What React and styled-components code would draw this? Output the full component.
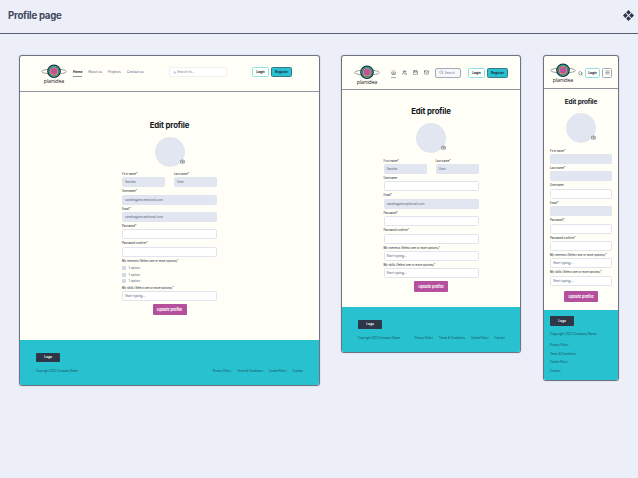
import React from "react";
import styled, { createGlobalStyle } from "styled-components";
import { Home, Users, Calendar, Mail, Search, Menu, Camera } from "lucide-react";

const GlobalStyle = createGlobalStyle`
  * { box-sizing: border-box; }
  body { margin: 0; background: #eceff8; font-family: Inter, sans-serif; color: #2d3748; }
`;

const Page = styled.div`
  width: 638px;
  height: 478px;
  overflow: hidden;
  background: #eceff8;
`;

const TopBar = styled.header`
  display: flex;
  align-items: center;
  justify-content: space-between;
  height: 34px;
  padding: 0 4px 2px 8px;
  border-bottom: 1px solid #596174;
`;

const TopTitle = styled.h1`
  margin: 0;
  font-size: 9.7px;
  font-weight: 700;
  letter-spacing: -0.28px;
  color: #424a5e;
`;

const Board = styled.main`
  display: flex;
  align-items: flex-start;
  padding: 21px 0 0 19px;
`;

const Frame = styled.section`
  flex: none;
  display: flex;
  flex-direction: column;
  width: ${(p) => p.$w}px;
  height: ${(p) => p.$h}px;
  margin-right: ${(p) => p.$after || 0}px;
  border: 1px solid #6d7484;
  border-radius: 3px;
  background: #fffff8;
  box-shadow: 0 0 1px #8d93a3;
  overflow: hidden;
`;

const FrameHeader = styled.header`
  flex: none;
  display: flex;
  align-items: flex-start;
  height: ${(p) => p.$h}px;
  padding: ${(p) => p.$pad};
  border-bottom: 1px solid #8f949c;
`;

const Brand = styled.div`
  flex: none;
  display: flex;
  flex-direction: column;
  align-items: center;
  width: 26px;
`;

const BrandName = styled.span`
  font-family: "Open Sans", sans-serif;
  font-size: 5.4px;
  line-height: 6px;
  margin-top: -1px;
  letter-spacing: -0.15px;
  color: #1c2028;
`;

const Nav = styled.nav`
  display: flex;
  gap: ${(p) => p.$gap}px;
  margin: ${(p) => p.$margin};
`;

const NavLink = styled.a`
  height: 7px;
  width: ${(p) => p.$w}px;
  font-size: 3.25px;
  line-height: 5px;
  white-space: nowrap;
  font-weight: ${(p) => (p.$active ? 700 : 500)};
  color: ${(p) => (p.$active ? "#242b3a" : "#6f7990")};
  border-bottom: ${(p) => (p.$active ? "1px solid #8d93a0" : "none")};
`;

const NavIcon = styled.a`
  display: flex;
  justify-content: center;
  width: 5px;
  height: 8px;
  color: #2d3748;
  border-bottom: ${(p) => (p.$active ? "1px solid #a6abb5" : "none")};
  svg { flex: none; }
`;

const SearchBox = styled.div`
  flex: none;
  display: flex;
  align-items: center;
  gap: 1px;
  width: ${(p) => p.$w}px;
  height: 10px;
  margin: ${(p) => p.$margin};
  padding-left: 3px;
  border: 1px solid ${(p) => (p.$strong ? "#a3aab8" : "#eef0f4")};
  border-radius: 2px;
  background: ${(p) => (p.$strong ? "#f7f8fc" : "#fff")};
  font-size: 3.1px;
  color: #737d92;
`;

const HeaderButton = styled.button`
  flex: none;
  display: flex;
  align-items: center;
  justify-content: center;
  width: ${(p) => p.$w}px;
  height: 10px;
  margin: ${(p) => p.$margin};
  padding: 0;
  border: 1px solid ${(p) => p.$border || "#8fe0e4"};
  border-radius: 1.5px;
  background: ${(p) => (p.$fill ? "#27c1cf" : "#fffffb")};
  font-family: inherit;
  font-size: 3.2px;
  font-weight: 700;
  color: #202b3b;
`;

const Content = styled.div`
  flex: 1;
  display: flex;
  flex-direction: column;
  align-items: center;
  padding-top: ${(p) => p.$top}px;
`;

const Heading = styled.h2`
  margin: 0 0 ${(p) => p.$after}px;
  font-size: ${(p) => p.$size}px;
  line-height: 10px;
  font-weight: 700;
  letter-spacing: -0.12px;
  color: #12151c;
`;

const Avatar = styled.div`
  position: relative;
  width: 30px;
  height: 30px;
  border-radius: 50%;
  background: #e2e6f0;
`;

const AvatarAction = styled.span`
  position: absolute;
  right: 0;
  bottom: 3px;
  display: flex;
  color: #3c4456;
`;

const Form = styled.form`
  display: flex;
  flex-direction: column;
  width: ${(p) => p.$w}px;
  margin-top: 5.2px;
`;

const FieldRow = styled.div`
  display: grid;
  grid-template-columns: 1fr 1fr;
  gap: 9px;
`;

const FieldBlock = styled.label`
  flex: none;
  display: flex;
  flex-direction: column;
  height: 17.4px;
`;

const Label = styled.span`
  flex: none;
  height: 5.4px;
  font-size: 2.8px;
  line-height: 4.8px;
  font-weight: 500;
  white-space: nowrap;
  color: #363e4e;
`;

const Control = styled.span`
  flex: none;
  display: flex;
  align-items: center;
  height: 10px;
  padding-left: 2px;
  border: 1px solid ${(p) => (p.$filled ? "#dfe4ef" : "#e0e4ee")};
  border-radius: 1.5px;
  background: ${(p) => (p.$filled ? "#e2e6f0" : "#fff")};
  font-size: 3.2px;
  white-space: nowrap;
  color: #58627a;
`;

const Options = styled.div`
  flex: none;
  display: flex;
  flex-direction: column;
  gap: 2.4px;
  height: 21.7px;
  padding-top: 2px;
`;

const Option = styled.label`
  display: flex;
  align-items: center;
  gap: 2.5px;
  height: 4px;
  font-size: 3.2px;
  color: #58627a;
`;

const Box = styled.span`
  width: 4px;
  height: 4px;
  border-radius: 1px;
  background: #d0d7e8;
`;

const Submit = styled.button`
  flex: none;
  align-self: center;
  width: 34px;
  height: 11px;
  margin-top: ${(p) => p.$top}px;
  padding: 0;
  border: 0;
  border-radius: 1px;
  background: #b4509c;
  font-family: inherit;
  font-size: 3.7px;
  font-weight: 700;
  color: #fff;
`;

const Footer = styled.footer`
  flex: none;
  height: ${(p) => p.$h}px;
  padding: ${(p) => p.$pad};
  background: #27c1cf;
`;

const FooterLogo = styled.div`
  display: flex;
  align-items: center;
  justify-content: center;
  width: 24px;
  height: 9.6px;
  border-radius: 1px;
  background: #2d3748;
  font-size: 3.2px;
  font-weight: 600;
  color: #fff;
`;

const FooterLine = styled.div`
  display: flex;
  flex-direction: ${(p) => (p.$stack ? "column" : "row")};
  justify-content: space-between;
  margin-top: 6.4px;
  font-size: 2.8px;
  line-height: 4px;
  white-space: nowrap;
  color: #1b4d5b;
`;

const Copyright = styled.span`
  font-size: ${(p) => p.$size || 2.75}px;
`;

const FooterLinks = styled.div`
  display: flex;
  flex-direction: ${(p) => (p.$stack ? "column" : "row")};
  gap: ${(p) => (p.$stack ? 4.8 : 5.9)}px;
  margin-top: ${(p) => (p.$stack ? 6.5 : 0)}px;
`;

function Logo() {
  return (
    <Brand>
      <svg width="26" height="15" viewBox="0 0 26 15" fill="none">
        <ellipse cx="13" cy="7.5" rx="12.4" ry="2.5" stroke="#5c6368" strokeWidth=".6" />
        <circle cx="13" cy="7.3" r="6.8" fill="#17252c" />
        <circle cx="13" cy="7.3" r="5.2" stroke="#24b5b8" strokeWidth="1.1" />
        <circle cx="13" cy="7.3" r="4.4" fill="#e0905c" />
        <circle cx="13" cy="7.3" r="3.3" fill="#b855a0" />
      </svg>
      <BrandName>planidea</BrandName>
    </Brand>
  );
}

function Field({ label, value, filled }) {
  return (
    <FieldBlock>
      <Label>{label}</Label>
      <Control $filled={filled}>{value}</Control>
    </FieldBlock>
  );
}

function ProfileHead({ size = 7.8, after = 7 }) {
  return (
    <>
      <Heading $size={size} $after={after}>Edit profile</Heading>
      <Avatar>
        <AvatarAction><Camera size={5} strokeWidth={2.2} /></AvatarAction>
      </Avatar>
    </>
  );
}

function PageFooter({ height, pad, stack, copySize }) {
  return (
    <Footer $h={height} $pad={pad}>
      <FooterLogo>Logo</FooterLogo>
      <FooterLine $stack={stack}>
        <Copyright $size={copySize}>Copyright 2022 Company Name</Copyright>
        <FooterLinks $stack={stack}>
          <span>Privacy Policy</span>
          <span>Terms &amp; Conditions</span>
          <span>Cookie Policy</span>
          <span>Contact</span>
        </FooterLinks>
      </FooterLine>
    </Footer>
  );
}

const EMAIL = "sandra@exceptional.com";
const INTERESTS = "My interests (Select one or more options)*";
const SKILLS = "My skills (Select one or more options)*";

function Desktop() {
  return (
    <Frame $w={301} $h={331} $after={21}>
      <FrameHeader $h={36} $pad="8px 27px 0 21px">
        <Logo />
        <Nav $gap={6} $margin="5.5px 0 0 6px">
          <NavLink $w={9} $active>Home</NavLink>
          <NavLink $w={14}>About us</NavLink>
          <NavLink $w={13}>Projects</NavLink>
          <NavLink $w={17}>Contact us</NavLink>
        </Nav>
        <SearchBox $w={58} $margin="3px 0 0 25px">
          <Search size={3} />Search for...
        </SearchBox>
        <HeaderButton $w={17} $margin="3px 0 0 auto">Login</HeaderButton>
        <HeaderButton $w={21} $margin="3px 0 0 2px" $fill $border="#3b7888">Register</HeaderButton>
      </FrameHeader>
      <Content $top={27.6}>
        <ProfileHead />
        <Form $w={95}>
          <FieldRow>
            <Field label="First name*" value="Sandra" filled />
            <Field label="Last name*" value="User" filled />
          </FieldRow>
          <Field label="Username*" value={EMAIL} filled />
          <Field label="Email*" value={EMAIL} filled />
          <Field label="Password*" />
          <Field label="Password confirm*" />
          <Label>{INTERESTS}</Label>
          <Options>
            <Option><Box />1 option</Option>
            <Option><Box />1 option</Option>
            <Option><Box />1 option</Option>
          </Options>
          <Field label={SKILLS} value="Start typing..." />
          <Submit $top={0.3}>Update profile</Submit>
        </Form>
      </Content>
      <PageFooter height={45} pad="12.6px 16px 0" />
    </Frame>
  );
}

function Tablet() {
  return (
    <Frame $w={180} $h={298} $after={22}>
      <FrameHeader $h={34} $pad="8.6px 12px 0 12px">
        <Logo />
        <Nav $gap={6} $margin="5px 0 0 11px">
          <NavIcon $active><Home size={5} /></NavIcon>
          <NavIcon><Users size={5} /></NavIcon>
          <NavIcon><Calendar size={5} /></NavIcon>
          <NavIcon><Mail size={5} /></NavIcon>
        </Nav>
        <SearchBox $w={26} $margin="3px 0 0 6px" $strong>
          <Search size={4.5} />Search
        </SearchBox>
        <HeaderButton $w={17} $margin="3px 0 0 auto">Login</HeaderButton>
        <HeaderButton $w={21} $margin="3px 0 0 2px" $fill $border="#3b7888">Register</HeaderButton>
      </FrameHeader>
      <Content $top={16.4}>
        <ProfileHead />
        <Form $w={95}>
          <FieldRow>
            <Field label="First name*" value="Sandra" filled />
            <Field label="Last name*" value="User" filled />
          </FieldRow>
          <Field label="Username" />
          <Field label="Email*" value={EMAIL} filled />
          <Field label="Password*" />
          <Field label="Password confirm*" />
          <Field label={INTERESTS} value="Start typing..." />
          <Field label={SKILLS} value="Start typing..." />
          <Submit $top={0.8}>Update profile</Submit>
        </Form>
      </Content>
      <PageFooter height={45} pad="12.6px 15px 0 16px" />
    </Frame>
  );
}

const MobileSearch = styled.span`
  display: flex;
  margin: 8px 0 0 2px;
`;

function Mobile() {
  return (
    <Frame $w={76} $h={326}>
      <FrameHeader $h={33} $pad="6.6px 6px 0 6px">
        <Logo />
        <MobileSearch><Search size={5} /></MobileSearch>
        <HeaderButton $w={15} $margin="5px 0 0 auto">Login</HeaderButton>
        <HeaderButton $w={10} $margin="5px 0 0 2px" $border="#a0a6b2"><Menu size={5} /></HeaderButton>
      </FrameHeader>
      <Content $top={8.4}>
        <ProfileHead size={6.4} after={6} />
        <Form $w={62}>
          <Field label="First name*" filled />
          <Field label="Last name*" filled />
          <Field label="Username" />
          <Field label="Email*" filled />
          <Field label="Password*" />
          <Field label="Password confirm*" />
          <Field label={INTERESTS} value="Start typing..." />
          <Field label={SKILLS} value="Start typing..." />
          <Submit $top={3.3}>Update profile</Submit>
        </Form>
      </Content>
      <PageFooter height={70} pad="6.4px 6px 0" stack copySize={3.05} />
    </Frame>
  );
}

export default function App() {
  return (
    <Page>
      <GlobalStyle />
      <TopBar>
        <TopTitle>Profile page</TopTitle>
        <svg width="11" height="11" viewBox="0 0 12 12" fill="#2d3348">
          <path d="M6 0 8.6 2.6 6 5.2 3.4 2.6ZM2.6 3.4 5.2 6 2.6 8.6 0 6ZM9.4 3.4 12 6 9.4 8.6 6.8 6ZM6 6.8 8.6 9.4 6 12 3.4 9.4Z" />
        </svg>
      </TopBar>
      <Board>
        <Desktop />
        <Tablet />
        <Mobile />
      </Board>
    </Page>
  );
}
